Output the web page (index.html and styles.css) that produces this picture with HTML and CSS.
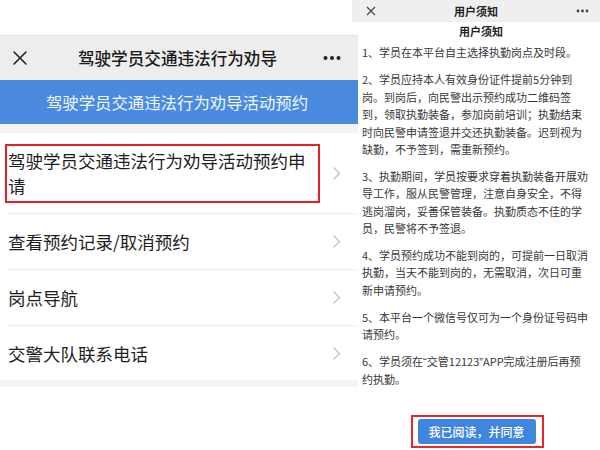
FILE: index.html
```html
<!DOCTYPE html>
<html lang="zh-CN">
<head>
<meta charset="utf-8">
<title>驾驶学员交通违法行为劝导活动预约</title>
<link rel="stylesheet" href="styles.css">
</head>
<body>
<div class="stage">
  <section class="left">
    <div class="topgap"></div>
    <header class="nav">
      <svg class="nav-close" width="16" height="16" viewBox="0 0 16 16"><path d="M2 2 L14 14 M14 2 L2 14" stroke="#222" stroke-width="1.6" fill="none" stroke-linecap="round"/></svg>
      <div class="nav-title">驾驶学员交通违法行为劝导</div>
      <svg class="nav-more" width="18" height="6" viewBox="0 0 18 6"><circle cx="2.5" cy="3" r="2" fill="#222"/><circle cx="9" cy="3" r="2" fill="#222"/><circle cx="15.5" cy="3" r="2" fill="#222"/></svg>
    </header>
    <div class="banner">驾驶学员交通违法行为劝导活动预约</div>
    <div class="gap"></div>
    <ul class="menu">
      <li class="item item-first">
        <span class="hl">驾驶学员交通违法行为劝导活动预约申<br>请</span>
        <svg class="chev" width="9" height="15" viewBox="0 0 9 15"><path d="M1.5 1.5 L7.5 7.5 L1.5 13.5" stroke="#c3c3c7" stroke-width="1.4" fill="none"/></svg>
      </li>
      <li class="item">
        <span>查看预约记录/取消预约</span>
        <svg class="chev" width="9" height="15" viewBox="0 0 9 15"><path d="M1.5 1.5 L7.5 7.5 L1.5 13.5" stroke="#c3c3c7" stroke-width="1.4" fill="none"/></svg>
      </li>
      <li class="item">
        <span>岗点导航</span>
        <svg class="chev" width="9" height="15" viewBox="0 0 9 15"><path d="M1.5 1.5 L7.5 7.5 L1.5 13.5" stroke="#c3c3c7" stroke-width="1.4" fill="none"/></svg>
      </li>
      <li class="item item-last">
        <span>交警大队联系电话</span>
        <svg class="chev" width="9" height="15" viewBox="0 0 9 15"><path d="M1.5 1.5 L7.5 7.5 L1.5 13.5" stroke="#c3c3c7" stroke-width="1.4" fill="none"/></svg>
      </li>
    </ul>
    <div class="band"></div>
  </section>

  <section class="right">
    <header class="rnav">
      <svg class="rnav-close" width="10" height="10" viewBox="0 0 10 10"><path d="M1 1 L9 9 M9 1 L1 9" stroke="#444" stroke-width="1.2" fill="none"/></svg>
      <div class="rnav-title">用户须知</div>
      <svg class="rnav-more" width="13" height="4" viewBox="0 0 13 4"><circle cx="2" cy="2" r="1.4" fill="#444"/><circle cx="6.5" cy="2" r="1.4" fill="#444"/><circle cx="11" cy="2" r="1.4" fill="#444"/></svg>
    </header>
    <div class="notice">
      <h2 class="notice-title">用户须知</h2>
      <p>1、学员在本平台自主选择执勤岗点及时段。</p>
      <p>2、学员应持本人有效身份证件提前5分钟到<br>岗。到岗后，向民警出示预约成功二维码签<br>到，领取执勤装备，参加岗前培训；执勤结束<br>时向民警申请签退并交还执勤装备。迟到视为<br>缺勤，不予签到，需重新预约。</p>
      <p>3、执勤期间，学员按要求穿着执勤装备开展劝<br>导工作，服从民警管理，注意自身安全，不得<br>逃岗溜岗，妥善保管装备。执勤质态不佳的学<br>员，民警将不予签退。</p>
      <p>4、学员预约成功不能到岗的，可提前一日取消<br>执勤，当天不能到岗的，无需取消，次日可重<br>新申请预约。</p>
      <p>5、本平台一个微信号仅可为一个身份证号码申<br>请预约。</p>
      <p>6、学员须在<span class="q">“</span>交管12123<span class="q">”</span>APP完成注册后再预<br>约执勤。</p>
    </div>
    <div class="actions">
      <div class="btn-frame"><button class="btn">我已阅读，并同意</button></div>
    </div>
  </section>
</div>
</body>
</html>
```

FILE: styles.css
```css
* { box-sizing: border-box; }
html, body { margin: 0; padding: 0; background: #fff; }
body {
  width: 600px;
  height: 450px;
  overflow: hidden;
  font-family: "Noto Sans CJK SC", "Noto Sans", sans-serif;
  color: #1c1c1c;
}
.stage { display: flex; width: 600px; height: 450px; }

/* left phone */
.left { width: 358px; flex: none; display: flex; flex-direction: column; background: #fff; }
.topgap { height: 36px; border-bottom: 1px solid #e4e4e4; background: #fff; }
.nav {
  height: 44px;
  background: #ededed;
  display: flex;
  align-items: center;
  padding: 0 17px 0 12px;
}
.nav-close { flex: none; }
.nav-title {
  flex: 1;
  text-align: center;
  font-size: 16.6px;
  font-weight: 500;
  color: #1b1b1b;
  padding-left: 4px;
}
.nav-more { flex: none; }
.banner {
  height: 44px;
  background: #4a8be0;
  color: #f2f6fd;
  font-size: 16.4px;
  display: flex;
  align-items: center;
  justify-content: center;
  padding-right: 4px;
}
.gap { height: 9px; background: #f3f4f7; }
.menu { list-style: none; margin: 0; padding: 0; background: #fff; }
.item {
  margin-left: 8px;
  height: 56px;
  border-bottom: 1px solid #ececef;
  display: flex;
  align-items: center;
  justify-content: space-between;
  padding-right: 17px;
  font-size: 17.5px;
  color: #1e1e1e;
}
.item-first { height: 81px; }
.item-last { border-bottom: none; height: 54px; }
.hl {
  margin-left: -3px;
  width: 315px;
  border: 2px solid #e4212b;
  padding: 2px 1px 3px;
  line-height: 25px;
}
.chev { flex: none; }
.band { height: 7px; background: #f5f5f7; }

/* right phone */
.right { width: 242px; flex: none; display: flex; flex-direction: column; background: #fff; }
.rnav {
  margin-left: -6px;
  height: 22px;
  background: #efefef;
  display: flex;
  align-items: center;
  padding: 0 11px 0 14px;
}
.rnav-close { flex: none; }
.rnav-title {
  flex: 1;
  text-align: center;
  font-size: 11px;
  font-weight: 700;
  color: #222;
}
.rnav-more { flex: none; }
.notice {
  padding: 1px 0 0 4px;
  font-size: 11px;
  line-height: 17.4px;
  color: #383838;
  white-space: nowrap;
}
.q { font-family: "Liberation Sans", sans-serif; }
.notice-title {
  margin: 0 0 4px;
  text-align: center;
  font-size: 11px;
  font-weight: 700;
  line-height: 17.4px;
  color: #222;
}
.notice p { margin: 0 0 9.5px; }
.actions { display: flex; justify-content: center; margin-top: 17px; padding-right: 4px; }
.btn-frame { border: 2px solid #e8262d; padding: 2px 6px 2px 5px; }
.btn {
  display: block;
  width: 118px;
  height: 25px;
  border: none;
  border-radius: 3px;
  background: #3f86e0;
  color: #fff;
  font-family: "Noto Sans CJK SC", "Noto Sans", sans-serif;
  font-size: 12px;
  font-weight: 500;
  padding: 0;
}
```
